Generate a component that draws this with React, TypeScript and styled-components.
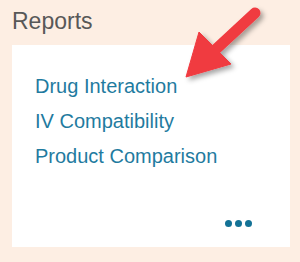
import React from 'react'
import styled, { createGlobalStyle } from 'styled-components'

const GlobalStyle = createGlobalStyle`
  html, body {
    margin: 0;
    padding: 0;
    background: #fdeee3;
  }
  body {
    font-family: "Liberation Sans", Arial, sans-serif;
  }
`

const Page = styled.div`
  position: relative;
  width: 300px;
  height: 262px;
  padding: 8px 10px 0 12px;
  box-sizing: border-box;
  background: #fdeee3;
  overflow: hidden;
`

const Title = styled.h2`
  margin: 0;
  font-size: 23px;
  line-height: 26px;
  font-weight: normal;
  color: #585858;
`

const Card = styled.div`
  margin-top: 11px;
  width: 278px;
  height: 202px;
  box-sizing: border-box;
  padding: 24px 38px 20px 23px;
  background: #ffffff;
  display: flex;
  flex-direction: column;
`

const LinkList = styled.ul`
  list-style: none;
  margin: 0;
  padding: 0;
`

const LinkItem = styled.li`
  font-size: 20px;
  line-height: 35px;
  color: #1f7ba0;
  cursor: pointer;
`

const Footer = styled.div`
  margin-top: auto;
  display: flex;
  justify-content: flex-end;
  gap: 3px;
`

const Dot = styled.span`
  width: 7px;
  height: 7px;
  border-radius: 50%;
  background: #137296;
`

const Arrow = styled.svg`
  position: absolute;
  left: 0;
  top: 0;
  pointer-events: none;
`

const links = ['Drug Interaction', 'IV Compatibility', 'Product Comparison']

function App(): JSX.Element {
  return (
    <>
      <GlobalStyle />
      <Page>
        <Title>Reports</Title>
        <Card>
          <LinkList>
            {links.map((l) => (
              <LinkItem key={l}>{l}</LinkItem>
            ))}
          </LinkList>
          <Footer>
            <Dot />
            <Dot />
            <Dot />
          </Footer>
        </Card>
        <Arrow width="300" height="262" viewBox="0 0 300 262">
          <defs>
            <filter id="shadow" x="-20%" y="-20%" width="140%" height="140%">
              <feDropShadow dx="3" dy="3" stdDeviation="2.5" floodColor="#000" floodOpacity="0.35" />
            </filter>
          </defs>
          <g filter="url(#shadow)" fill="#f03a40" stroke="#f03a40">
            <line x1="255" y1="13" x2="214" y2="51" strokeWidth="11" strokeLinecap="round" />
            <polygon points="186,77 199,32 231,64" strokeWidth="1" strokeLinejoin="round" />
          </g>
        </Arrow>
      </Page>
    </>
  )
}

export default App
